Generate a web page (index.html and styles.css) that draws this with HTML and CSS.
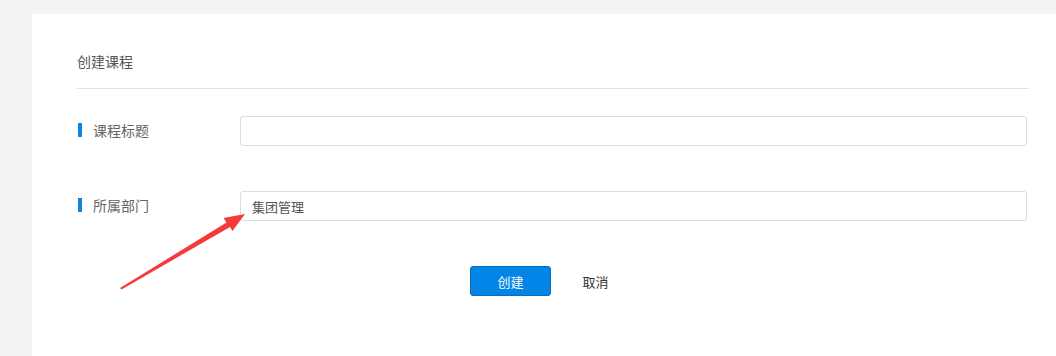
FILE: index.html
```html
<!DOCTYPE html>
<html lang="zh-CN">
<head>
    <meta charset="UTF-8">
    <meta name="viewport" content="width=device-width, initial-scale=1.0">
    <title>创建课程</title>
    <link rel="stylesheet" href="styles.css">
</head>
<body>
    <div class="card">
        <div class="card-header">创建课程</div>
        <form class="form">
            <div class="form-row">
                <label class="form-label">课程标题</label>
                <input class="form-input" type="text" value="">
            </div>
            <div class="form-row">
                <label class="form-label">所属部门</label>
                <input class="form-input" type="text" value="集团管理">
            </div>
            <div class="form-actions">
                <button type="button" class="btn btn-primary">创建</button>
                <button type="button" class="btn btn-text">取消</button>
            </div>
        </form>
    </div>

    <!-- 标注箭头 -->
    <svg class="annotation" width="1056" height="356" viewBox="0 0 1056 356">
        <polygon points="120,288 226.5,222.5 223.5,218 245,214 232.5,231 230,227 121.5,289.5" fill="#f43b3b"/>
    </svg>
</body>
</html>
```

FILE: styles.css
```css
body {
    margin: 0;
    background: #f2f3f5;
    font-family: "Noto Sans CJK SC", "Noto Sans", sans-serif;
    font-size: 14px;
    color: #555;
}
.card {
    margin: 14px 0 0 32px;
    background: #fff;
    padding: 0 27px 0 45px;
    height: 342px;
    box-sizing: border-box;
}
.card-header {
    padding: 38px 0 18px;
    line-height: 18px;
    font-size: 14px;
    color: #555;
    border-bottom: 1px solid #e2e2e2;
}
.form {
    padding-top: 27px;
}
.form-row {
    display: flex;
    align-items: center;
    height: 30px;
    margin-bottom: 45px;
    padding-right: 2px;
}
.form-label {
    width: 163px;
    flex-shrink: 0;
    display: flex;
    align-items: center;
    color: #666;
    font-size: 14px;
    line-height: 14px;
    padding-bottom: 3px;
}
.form-label::before {
    content: "";
    display: inline-block;
    width: 4px;
    height: 14px;
    margin: 0 11px 0 1px;
    background: #0a84e6;
}
.form-input {
    flex: 1;
    height: 30px;
    box-sizing: border-box;
    border: 1px solid #dcdcdc;
    border-radius: 3px;
    padding: 0 11px;
    font-family: inherit;
    font-size: 13px;
    color: #555;
    outline: none;
}
.form-actions {
    display: flex;
    justify-content: center;
    gap: 4px;
    margin-top: 1px;
}
.btn {
    width: 81px;
    height: 30px;
    border-radius: 3px;
    font-family: inherit;
    font-size: 13px;
    cursor: pointer;
}
.btn-primary {
    background: #0385e8;
    border: 1px solid #0a6ec0;
    color: #fff;
}
.btn-text {
    background: transparent;
    border: 1px solid transparent;
    color: #333;
}
.annotation {
    position: absolute;
    left: 0;
    top: 0;
    pointer-events: none;
}
```
